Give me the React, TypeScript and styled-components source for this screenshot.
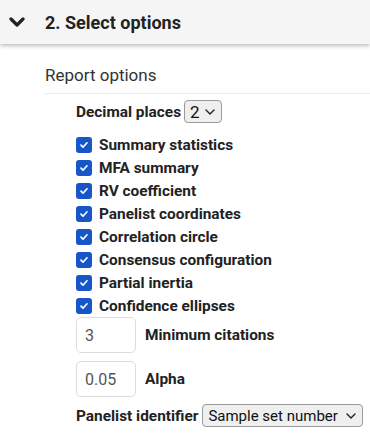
import styled, { createGlobalStyle } from "styled-components";

const Global = createGlobalStyle`
  body {
    margin: 0;
    background: #ffffff;
    font-family: Roboto, "Liberation Sans", Arial, sans-serif;
    color: #212121;
  }
`;

const Header = styled.div`
  height: 44px;
  background-color: #f5f5f5;
  box-shadow: 0 2px 4px rgba(0, 0, 0, 0.25);
  display: flex;
  align-items: center;
  padding-left: 9px;
  gap: 20px;
`;

const Title = styled.h2`
  margin: 0;
  font-size: 18px;
  font-weight: 700;
  color: #222;
`;

const Section = styled.div`
  margin-left: 45px;
  padding-top: 21px;
`;

const SectionTitle = styled.div`
  font-size: 17px;
  font-weight: 400;
  color: #333;
  padding-bottom: 8px;
  border-bottom: 1px solid #ececec;
`;

const Options = styled.div`
  padding-left: 31px;
  padding-top: 6px;
  display: flex;
  flex-direction: column;
`;

const Label = styled.span`
  font-size: 15.4px;
  font-weight: 700;
  color: #222;
  white-space: nowrap;
`;

const Row = styled.div<{ gap?: number }>`
  display: flex;
  align-items: center;
  gap: ${({ gap }) => gap ?? 4}px;
`;

const SelectBox = styled.div<{ width: number; size?: number }>`
  width: ${({ width }) => width}px;
  height: 23px;
  box-sizing: border-box;
  border: 1px solid #9a9a9a;
  border-radius: 4px;
  background-color: #efefef;
  display: flex;
  align-items: center;
  justify-content: space-between;
  padding: 0 6px 0 5px;
  font-size: ${({ size }) => size ?? 15}px;
  color: #111;
  white-space: nowrap;
`;

const CheckList = styled.div`
  display: flex;
  flex-direction: column;
  margin-top: 10px;
`;

const CheckRow = styled.label`
  height: 23px;
  display: flex;
  align-items: center;
  gap: 7px;
`;

const Box = styled.span`
  width: 16px;
  height: 16px;
  border-radius: 3px;
  background-color: #1756c8;
  display: flex;
  align-items: center;
  justify-content: center;
`;

const NumberBox = styled.div`
  width: 60px;
  height: 36px;
  box-sizing: border-box;
  border: 1px solid #dcdcdc;
  border-radius: 5px;
  display: flex;
  align-items: center;
  padding-left: 8px;
  font-size: 16px;
  color: #555;
`;

const InputList = styled.div`
  display: flex;
  flex-direction: column;
  gap: 8px;
`;

const Footer = styled(Row)`
  margin-top: 7px;
`;

const Chevron = ({ size = 10 }: { size?: number }) => (
  <svg width={size} height={size * 0.6} viewBox="0 0 10 6">
    <path d="M1 1l4 4 4-4" fill="none" stroke="#222" strokeWidth="1.4" strokeLinecap="round" strokeLinejoin="round" />
  </svg>
);

const checks = [
  "Summary statistics",
  "MFA summary",
  "RV coefficient",
  "Panelist coordinates",
  "Correlation circle",
  "Consensus configuration",
  "Partial inertia",
  "Confidence ellipses",
];

export default function App() {
  return (
    <>
      <Global />
      <Header>
        <svg width="16" height="11" viewBox="0 0 16 11">
          <path d="M2 2l6 6 6-6" fill="none" stroke="#222" strokeWidth="3.2" strokeLinecap="round" strokeLinejoin="round" />
        </svg>
        <Title>2. Select options</Title>
      </Header>
      <Section>
        <SectionTitle>Report options</SectionTitle>
        <Options>
          <Row gap={3}>
            <Label>Decimal places</Label>
            <SelectBox width={38} size={17}>
              2 <Chevron />
            </SelectBox>
          </Row>
          <CheckList>
            {checks.map((c) => (
              <CheckRow key={c}>
                <Box>
                  <svg width="10" height="8" viewBox="0 0 10 8">
                    <path d="M2 4.2l2 2 4-4.4" fill="none" stroke="#fff" strokeWidth="1.7" strokeLinecap="round" strokeLinejoin="round" />
                  </svg>
                </Box>
                <Label>{c}</Label>
              </CheckRow>
            ))}
          </CheckList>
          <InputList>
            <Row gap={9}>
              <NumberBox>3</NumberBox>
              <Label>Minimum citations</Label>
            </Row>
            <Row gap={9}>
              <NumberBox>0.05</NumberBox>
              <Label>Alpha</Label>
            </Row>
          </InputList>
          <Footer gap={4}>
            <Label>Panelist identifier</Label>
            <SelectBox width={161}>
              Sample set number <Chevron />
            </SelectBox>
          </Footer>
        </Options>
      </Section>
    </>
  );
}
